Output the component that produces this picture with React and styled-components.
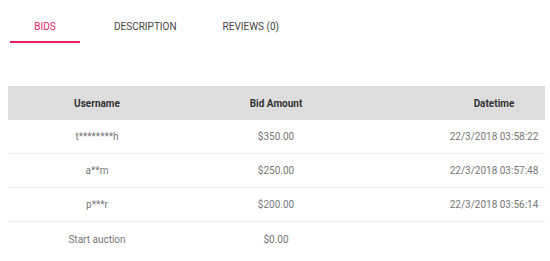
import React, { useState } from "react";
import styled, { createGlobalStyle } from "styled-components";

const GlobalStyle = createGlobalStyle`
  html, body {
    overflow: hidden;
    background: #fff;
  }
  body {
    margin: 8px 5px 0 8px;
    font-family: Roboto, "Liberation Sans", Arial, sans-serif;
  }
`;

const Tabs = styled.ul`
  display: flex;
  margin: 0 0 0 2px;
  padding: 0;
  list-style: none;
`;

const Tab = styled.li`
  min-width: 70px;
  height: 35px;
  box-sizing: border-box;
  padding: 3px 12px 0;
  margin-right: 22px;
  display: flex;
  align-items: center;
  justify-content: center;
  font-size: 10px;
  text-transform: uppercase;
  color: ${(p) => (p.active ? "#e91e63" : "#444")};
  border-bottom: 2px solid ${(p) => (p.active ? "#e91e63" : "transparent")};
  cursor: pointer;
`;

const TableWrap = styled.div`
  margin-top: 43px;
  overflow: hidden;
`;

const Table = styled.div`
  width: 614px;
`;

const Row = styled.div`
  display: grid;
  grid-template-columns: 178px 180px 256px;
  height: 34px;
  box-sizing: border-box;
  align-items: center;
  text-align: center;
  font-size: 10px;
  color: #777;
  border-bottom: 1px solid #eeeeee;

  &:last-child {
    border-bottom: none;
  }
`;

const HeadRow = styled(Row)`
  background: #dddddd;
  color: #333;
  font-weight: 700;
  border-bottom: none;
`;

const bids = [
  { user: "t********h", amount: "$350.00", time: "22/3/2018 03:58:22" },
  { user: "a**m", amount: "$250.00", time: "22/3/2018 03:57:48" },
  { user: "p***r", amount: "$200.00", time: "22/3/2018 03:56:14" },
  { user: "Start auction", amount: "$0.00", time: "" },
];

const App = () => {
  const [tab, setTab] = useState("bids");
  const tabs = [
    { id: "bids", label: "Bids" },
    { id: "description", label: "Description" },
    { id: "reviews", label: "Reviews (0)" },
  ];

  return (
    <>
      <GlobalStyle />
      <Tabs>
        {tabs.map((t) => (
          <Tab key={t.id} active={tab === t.id} onClick={() => setTab(t.id)}>
            {t.label}
          </Tab>
        ))}
      </Tabs>
      <TableWrap>
        <Table>
          <HeadRow>
            <span>Username</span>
            <span>Bid Amount</span>
            <span>Datetime</span>
          </HeadRow>
          {bids.map((b) => (
            <Row key={b.user}>
              <span>{b.user}</span>
              <span>{b.amount}</span>
              <span>{b.time}</span>
            </Row>
          ))}
        </Table>
      </TableWrap>
    </>
  );
};

export default App;
